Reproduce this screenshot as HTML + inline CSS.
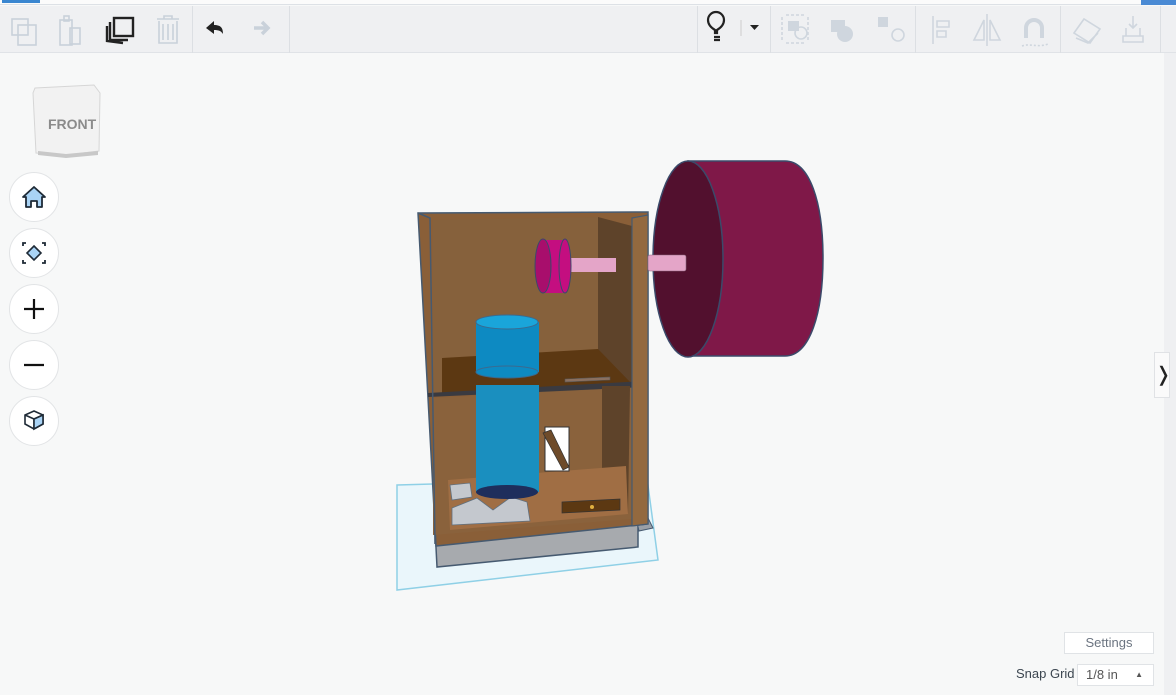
<!DOCTYPE html>
<html><head><meta charset="utf-8"><style>
*{margin:0;padding:0;box-sizing:border-box}
body{width:1176px;height:695px;overflow:hidden;background:#f7f8f8;font-family:"Liberation Sans",sans-serif;position:relative}
.top{position:absolute;left:0;top:0;width:1176px;height:5px;background:#fbfbfb;border-bottom:1px solid #dde1e6}
.tb{position:absolute;left:0;top:6px;width:1176px;height:47px;background:#eff0f2;border-bottom:1px solid #e0e3e7}
.sep{position:absolute;top:6px;width:1px;height:47px;background:#dcdfe3}
.ic{position:absolute}
.nav{position:absolute;left:9px;width:50px;height:50px;border-radius:50%;background:#fff;border:1px solid #e2e4e6;display:flex;align-items:center;justify-content:center}
.rs{position:absolute;left:1164px;top:53px;width:12px;height:642px;background:#eff0f2}
</style></head><body>
<div class="top"></div>
<div style="position:absolute;left:2px;top:0;width:38px;height:3px;background:#3a86d0"></div>
<div style="position:absolute;left:1141px;top:0;width:35px;height:5px;background:#4a8ad4"></div>
<div class="tb"></div>
<div class="sep" style="left:192px"></div>
<div class="sep" style="left:289px"></div>
<div class="sep" style="left:697px"></div><div class="sep" style="left:770px"></div>
<div class="sep" style="left:915px"></div><div class="sep" style="left:1060px"></div><div class="sep" style="left:1160px"></div>
<div class="rs"></div>
<svg class="ic" style="left:0;top:6px" width="1176" height="47">
<g fill="none" stroke="#c9d1da" stroke-width="1.6">
<rect x="12" y="13" width="16" height="16"/><rect x="18" y="19" width="18" height="20"/>
<rect x="60" y="14" width="12" height="25"/><rect x="70" y="22" width="10" height="16"/><rect x="64" y="10" width="5" height="5"/>
<path d="M157 13h22 M159 15v22h18v-22 M163 18v16 M168 18v16 M173 18v16 M164 13v-3h8v3"/>
<path d="M254 22h14 M262 16l6 6-6 6" stroke-width="3.5"/>
</g>
<g fill="none" stroke="#222" stroke-width="2.4"><rect x="114" y="12" width="19" height="18"/><path d="M110 16v18h18 M107 20v15 l16 2"/></g>
<path d="M206 22l8-7v4c7 0 9 3 9 9c-2-3-4-4-9-4v4z" fill="#222"/>
<g fill="none" stroke="#222" stroke-width="2.2"><path d="M715 27v-3c-5-3-7-6-7-10a8 8 0 0 1 16 0c0 4-2 7-7 10v3z"/><path d="M714 31h6M714 34h6"/></g>
<path d="M741 14v16" stroke="#ccc"/><path d="M750 19h9l-4.5 5z" fill="#222"/>
<g fill="#cfd6de" stroke="#cfd6de" stroke-width="1.6">
<rect x="788" y="15" width="11" height="10" stroke="none"/><circle cx="801" cy="27" r="6" fill="none"/>
<path d="M782 11v24M808 11v24M786 9h18M786 37h18" fill="none" stroke-dasharray="3 2"/>
<rect x="831" y="14" width="14" height="12" stroke="none"/><circle cx="845" cy="28" r="8" stroke="none"/>
<rect x="878" y="11" width="10" height="10" stroke="none"/><circle cx="898" cy="29" r="6" fill="none"/>
<path d="M933 10v28 M937 15h12v6h-12z M937 25h9v6h-9z" fill="none"/>
<path d="M987 8v32 M984 34l-10 0 10-20z M990 34l10 0-10-20z" fill="none"/>
<path d="M1026 32v-10a8 8 0 0 1 16 0v10" fill="none" stroke-width="4"/><path d="M1022 40c8-3 16 2 26-2" fill="none" stroke-dasharray="2 2"/>
<path d="M1074 27l10-14 16 10-10 14z M1076 32l12 5 10-10" fill="none"/>
<path d="M1133 10v12 M1129 18l4 4 4-4 M1126 22v8h14v-8 M1123 30h20v6h-20z" fill="none"/>
</g>
</svg>
<svg class="ic" style="left:30px;top:82px" width="75" height="80">
<path d="M5 6l59 -3 6 8-1 58-32 4-31-2-3-60z" fill="#f2f2f2" stroke="#d6d6d6"/>
<path d="M8 69l28 3 32-3v4l-32 3-28-3z" fill="#c8c8c8"/>
<text x="18" y="47" font-size="14" font-weight="bold" fill="#8b8b8b" font-family="Liberation Sans">FRONT</text>
</svg>
<div class="nav" style="top:172px"><svg width="28" height="28"><path d="M14 4l11 10h-3v10h-5v-6h-6v6h-5v-10h-3z" fill="#a9d3f5" stroke="#1e2a36" stroke-width="1.8" stroke-linejoin="round"/></svg></div>
<div class="nav" style="top:228px"><svg width="28" height="28"><path d="M14 7l7 7-7 7-7-7z" fill="#a9d3f5" stroke="#1e2a36" stroke-width="1.6"/><path d="M3 7v-3h3M22 4h3v3M25 21v3h-3M6 24h-3v-3" fill="none" stroke="#1e2a36" stroke-width="1.8"/></svg></div>
<div class="nav" style="top:284px"><svg width="28" height="28"><path d="M14 4v20M4 14h20" stroke="#111" stroke-width="2.2"/></svg></div>
<div class="nav" style="top:340px"><svg width="28" height="28"><path d="M4 14h20" stroke="#111" stroke-width="2.2"/></svg></div>
<div class="nav" style="top:396px"><svg width="28" height="28"><path d="M14 4l9 4v9l-9 5-9-5v-9z M5 8l9 4 9-4 M14 12v10" fill="#fff" stroke="#1e2a36" stroke-width="1.6"/><path d="M14 12l9-4v9l-9 5z" fill="#a9d3f5" stroke="#1e2a36" stroke-width="1.6"/></svg></div>
<svg class="ic" style="left:380px;top:150px" width="460" height="450">
<path d="M17 335l250-7 11 82-261 30z" fill="#eaf6fb" stroke="#8fd0e6" stroke-width="1.5"/>
<path d="M55 378l203-14v33l-201 20z" fill="#a7aaae" stroke="#465a70" stroke-width="1.5"/>
<path d="M256 368l10-4 7 14-14 3z" fill="#9aa0a8" stroke="#465a70"/>
<path d="M38 63l230-1v312l-212 22z" fill="#8a5f38" stroke="#465a70" stroke-width="1.5"/>
<path d="M53 70l165-3v175l-165 3z" fill="#86613c"/>
<path d="M218 67l34 9v160l-34-4z" fill="#5e432a"/>
<path d="M62 208l156-9 32 33-188 11z" fill="#5c3812"/>
<path d="M185 229l45-2v3l-45 2z" fill="#8a7060" stroke="#555" stroke-width=".6"/>
<path d="M48 243l218-12v6l-218 10z" fill="#3a3a40"/>
<path d="M53 248l212-11-2 131-210 17z" fill="#8a623c"/>
<path d="M222 236l28 0-2 128-26-26z" fill="#5e432a"/>
<path d="M68 330l178-14 2 48-178 16z" fill="#a06e44"/>
<path d="M182 352l58-3v11l-58 3z" fill="#5c3812" stroke="#333" stroke-width=".7"/>
<circle cx="212" cy="357" r="2" fill="#e0b040"/>
<rect x="165" y="277" width="24" height="44" fill="#fff" stroke="#333"/>
<path d="M163 283l8-3 18 37-6 3z" fill="#6e4b2a" stroke="#333" stroke-width=".7"/>
<path d="M72 358l25-10 16 12 18-13 16 5 3 19-78 4z M70 335l20-2 2 14-20 3z" fill="#c4c8ce" stroke="#60707f" stroke-width=".8"/>
<path d="M252 68l16-3v309l-16 2z" fill="#93693f" stroke="#465a70" stroke-width="1.2"/>
<path d="M38 63l12 5 5 326" fill="none" stroke="#465a70" stroke-width="1.5"/>
<rect x="96" y="235" width="63" height="107" fill="#1a8fbf"/>
<ellipse cx="127" cy="342" rx="31" ry="7" fill="#1e2e5c"/>
<rect x="96" y="172" width="63" height="50" fill="#0d8ac2"/>
<ellipse cx="127" cy="222" rx="31" ry="6" fill="#0d8ac2" stroke="#3b6a8f"/>
<ellipse cx="127" cy="172" rx="31" ry="7" fill="#1aa5da" stroke="#3b6a8f"/>
<rect x="188" y="108" width="48" height="14" fill="#e4a5c8"/>
<path d="M163 90h22v53h-22z" fill="#c40e80"/>
<ellipse cx="185" cy="116" rx="6" ry="27" fill="#c40e80" stroke="#3b4a6a"/>
<ellipse cx="163" cy="116" rx="8" ry="27" fill="#a80e6c" stroke="#3b4a6a"/>
<path d="M308 11h97c25 0 38 42 38 97s-13 98-38 98h-97z" fill="#7f1848" stroke="#3b4a6a" stroke-width="1.5"/>
<ellipse cx="308" cy="109" rx="35" ry="98" fill="#52102e" stroke="#3b4a6a" stroke-width="1.5"/>
<rect x="268" y="105" width="38" height="16" rx="2" fill="#e4a5c8" stroke="#8a6a80" stroke-width=".6"/>
</svg>
<div style="position:absolute;left:1154px;top:352px;width:16px;height:46px;background:#fafafa;border:1px solid #e0e2e5;font-size:20px;line-height:44px;text-align:center;color:#222">&#x276D;</div>
<div style="position:absolute;left:1064px;top:632px;width:90px;height:22px;background:#fff;border:1px solid #e0e3e6;font-size:13px;color:#6b7480;text-align:center;line-height:20px">Settings</div>
<div style="position:absolute;left:1016px;top:666px;font-size:13px;color:#3c4650">Snap Grid</div>
<div style="position:absolute;left:1077px;top:664px;width:77px;height:22px;background:#fff;border:1px solid #e0e3e6;font-size:13px;color:#555;line-height:20px;padding-left:8px">1/8 in<span style="position:absolute;right:10px;top:0;font-size:8px">&#9650;</span></div>
</body></html>
